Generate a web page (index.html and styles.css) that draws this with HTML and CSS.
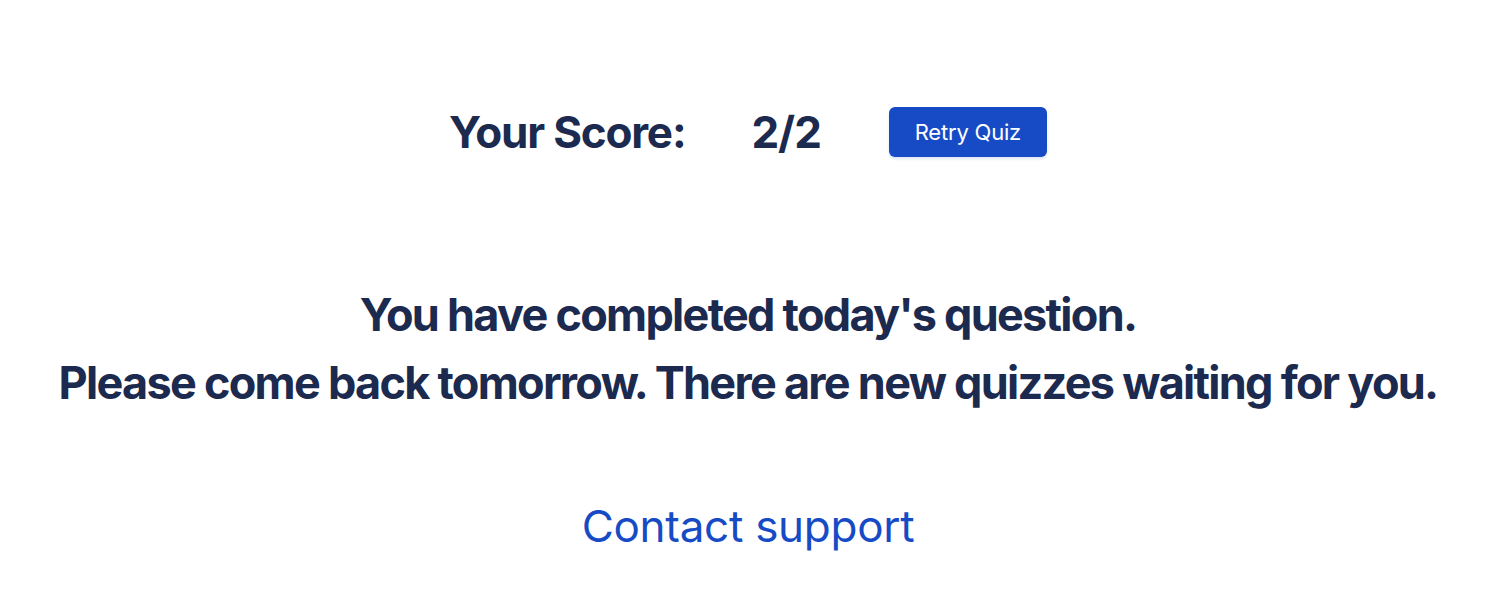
FILE: index.html
```html
<!DOCTYPE html>
<html>
<head>
<meta charset="utf-8">
<link rel="stylesheet" href="styles.css">
</head>
<body>
<main class="page">
  <div class="score-row">
    <span class="score-label">Your Score:</span>
    <span class="score-value">2/2</span>
    <button class="retry">Retry Quiz</button>
  </div>
  <div class="message">
    <p>You have completed today's question.</p>
    <p>Please come back tomorrow. There are new quizzes waiting for you.</p>
  </div>
  <a class="contact" href="#">Contact support</a>
</main>
</body>
</html>
```
FILE: styles.css
```css
html, body { margin: 0; padding: 0; background: #fff; }
body { font-family: Inter, "Noto Sans", sans-serif; color: #1b2a4e; }
.page { display: flex; flex-direction: column; align-items: center; padding-top: 106px; }
.score-row { display: flex; align-items: center; height: 51px; }
.score-label { font-size: 44px; font-weight: 700; letter-spacing: -1.2px; }
.score-value { font-size: 44px; font-weight: 700; letter-spacing: -1px; margin-left: 66px; }
.retry { margin-left: 68px; width: 158px; height: 50px; border: none; border-radius: 6px; background: #174bc6; color: #fff; font-family: Inter, sans-serif; font-size: 22px; letter-spacing: -0.2px; box-shadow: 0 2px 3px rgba(23,75,198,0.15); }
.message { margin-top: 124px; text-align: center; }
.message p { margin: 0; font-size: 45px; font-weight: 700; line-height: 68px; letter-spacing: -1.72px; }
.contact { margin-top: 82px; font-size: 44px; letter-spacing: -0.28px; color: #174bc6; text-decoration: none; }
```
